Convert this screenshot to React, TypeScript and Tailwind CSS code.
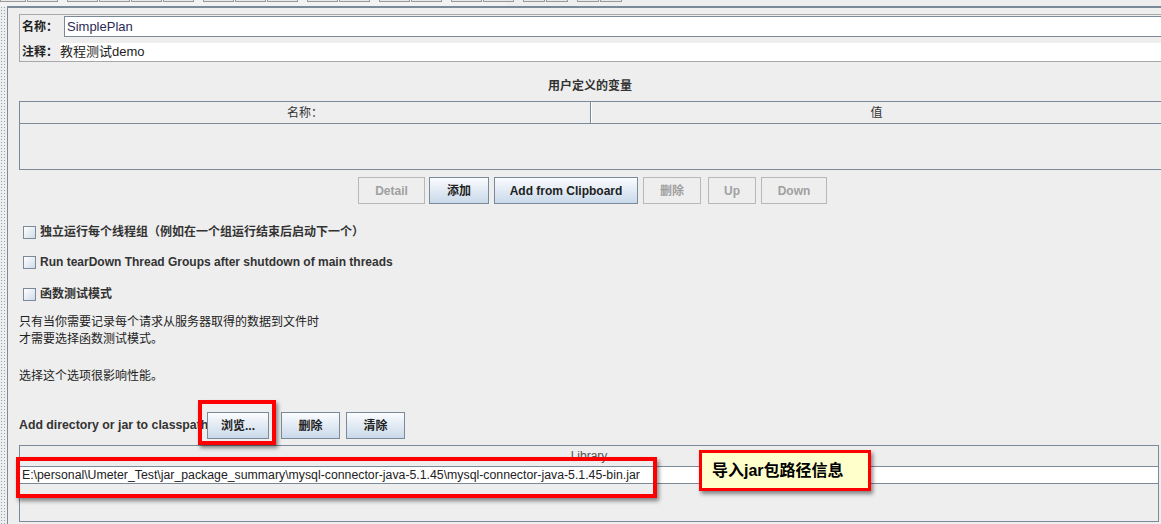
import React from 'react';

const font = '[font-family:"Liberation_Sans","Noto_Sans_CJK_SC",sans-serif]';

const toolGroups = [
  [26, 31],
  [31, 31, 31, 31],
  [31, 31, 31],
  [31, 31],
  [31, 31],
  [31, 31],
  [22, 22],
  [22, 22],
];

const Btn = ({ label, w, disabled, className = '' }: { label: string; w: number; disabled?: boolean; className?: string }) => (
  <div
    style={{ width: w }}
    className={`h-[27px] shrink-0 flex items-center justify-center text-[12px] font-bold border ${className} ${
      disabled
        ? 'border-[#b8b8b8] bg-[#eeeeee] text-[#a0a0a0]'
        : 'border-[#7a8a99] bg-gradient-to-b from-[#fbfcfe] to-[#c9d9ea] text-[#222]'
    }`}
  >
    {label}
  </div>
);

const Check = ({ label, className = '' }: { label: string; className?: string }) => (
  <div className={`h-[16px] flex items-center gap-[4px] pl-[4px] ${className}`}>
    <div className="w-[13px] h-[13px] border border-[#7a8a99] bg-gradient-to-br from-[#ffffff] to-[#cfdbe8]" />
    <span className="text-[12px] font-bold text-[#333]">{label}</span>
  </div>
);

export default function App() {
  return (
    <div className={`w-[1161px] h-[524px] overflow-hidden bg-[#eeeeee] relative ${font}`}>
      {/* toolbar remains */}
      <div className="h-[6px] flex items-stretch bg-[#f2f2f2] w-[507px] gap-[9px]">
        {toolGroups.map((g, i) => (
          <div key={i} className="flex gap-[1px]">
            {g.map((w, j) => (
              <div
                key={j}
                style={{ width: w }}
                className="h-[2px] border-x border-b border-[#9a9a9a] bg-[#e8e8e8]"
              />
            ))}
          </div>
        ))}
      </div>

      <div className="flex h-[518px]">
        {/* splitter */}
        <div className="w-[7px] h-full bg-[radial-gradient(circle,#8fa3b8_0.6px,transparent_0.8px)] bg-[length:3px_3px]" />
        <div className="flex-1 border-l border-t-2 border-[#7a8a99] pl-[11px]">
          {/* name panel */}
          <div className="mt-[6px] h-[48px] border-t border-l border-b border-[#a8a8a8] flex flex-col">
            <div className="flex items-center h-[22px] mt-[1px]">
              <span className="w-[44px] pl-[2px] text-[12px] font-bold text-[#222]">名称：</span>
              <div className="flex-1 h-[21px] border border-r-0 border-[#7a8a99] bg-white flex items-center pl-[2px] text-[13px] text-[#2b2b55]">
                SimplePlan
              </div>
            </div>
            <div className="flex items-center h-[18px] mt-[6px]">
              <span className="w-[40px] pl-[2px] text-[12px] font-bold text-[#222]">注释：</span>
              <div className="flex-1 h-[18px] bg-white flex items-center text-[13px] text-[#222]">
                教程测试demo
              </div>
            </div>
          </div>

          {/* user defined variables */}
          <div className="h-[39px] flex items-end justify-center pb-[6px] text-[12px] font-bold text-[#333]">
            用户定义的变量
          </div>
          <div className="h-[69px] border border-r-0 border-[#7a8a99]">
            <div className="h-[22px] flex border-b border-[#7a8a99] text-[12px] text-[#333]">
              <div className="w-[571px] border-r border-[#7a8a99] flex items-center justify-center">名称：</div>
              <div className="flex-1 border-l border-white flex items-center justify-center">值</div>
            </div>
          </div>

          <div className="mt-[7px] flex pl-[339px]">
            <Btn label="Detail" w={67} disabled />
            <Btn label="添加" w={60} className="ml-[4px]" />
            <Btn label="Add from Clipboard" w={144} className="ml-[5px]" />
            <Btn label="删除" w={58} disabled className="ml-[5px]" />
            <Btn label="Up" w={48} disabled className="ml-[7px]" />
            <Btn label="Down" w={66} disabled className="ml-[5px]" />
          </div>

          <Check className="mt-[20px]" label="独立运行每个线程组（例如在一个组运行结束后启动下一个）" />
          <Check className="mt-[14px]" label="Run tearDown Thread Groups after shutdown of main threads" />
          <Check className="mt-[16px]" label="函数测试模式" />

          <div className="mt-[12px] text-[12px] leading-[17px] text-[#222]">
            <div>只有当你需要记录每个请求从服务器取得的数据到文件时</div>
            <div>才需要选择函数测试模式。</div>
            <div className="h-[20px]" />
            <div>选择这个选项很影响性能。</div>
          </div>

          <div className="mt-[27px] flex items-center h-[27px]">
            <span className="w-[188px] text-[12.3px] font-bold text-[#333] whitespace-nowrap overflow-hidden">
              Add directory or jar to classpath
            </span>
            <Btn label="浏览..." w={62} />
            <Btn label="删除" w={59} className="ml-[12px]" />
            <Btn label="清除" w={59} className="ml-[6px]" />
          </div>

          <div className="mt-[6px] h-[77px] mr-[2px] border border-[#7a8a99]">
            <div className="h-[21px] flex items-center justify-center border-b border-[#7a8a99] text-[12px] text-[#555]">
              Library
            </div>
            <div className="h-[17px] bg-white border-b border-[#7a8a99] flex items-center pl-[2px] text-[12.3px] text-[#222] whitespace-nowrap">
              E:\personal\Umeter_Test\jar_package_summary\mysql-connector-java-5.1.45\mysql-connector-java-5.1.45-bin.jar
            </div>
          </div>
        </div>
      </div>

      {/* annotations */}
      <div className="absolute left-[198px] top-[400px] w-[78px] h-[45px] border-[4px] border-[#ff0000] shadow-[2px_3px_4px_rgba(0,0,0,0.45)]" />
      <div className="absolute left-[16px] top-[457px] w-[641px] h-[41px] border-[4px] border-[#ff0000] shadow-[2px_3px_4px_rgba(0,0,0,0.45)]" />
      <div className="absolute left-[699px] top-[450px] w-[172px] h-[41px] border-[3px] border-[#ff0000] bg-[#ffffcc] shadow-[2px_3px_4px_rgba(0,0,0,0.45)] flex items-center pl-[10px] text-[16px] font-bold text-black">
        导入jar包路径信息
      </div>
    </div>
  );
}
